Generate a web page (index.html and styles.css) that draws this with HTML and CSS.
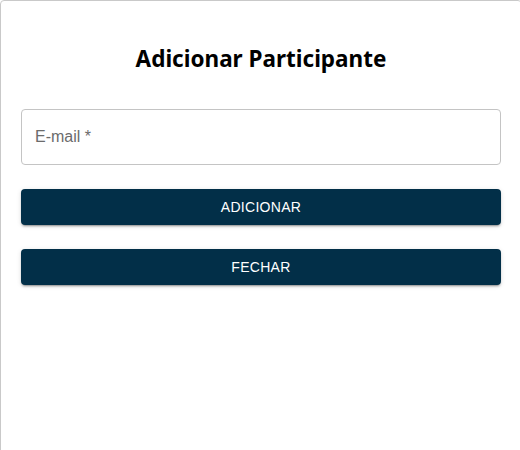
FILE: index.html
```html
<!DOCTYPE html>
<html lang="pt">
<head>
<meta charset="utf-8">
<title>Adicionar Participante</title>
<link rel="stylesheet" href="styles.css">
</head>
<body>
<div class="card">
  <h2 class="title">Adicionar Participante</h2>
  <div class="field">
    <span class="label">E-mail *</span>
  </div>
  <button class="btn">ADICIONAR</button>
  <button class="btn">FECHAR</button>
</div>
</body>
</html>
```
FILE: styles.css
```css
html, body {
  margin: 0;
  padding: 0;
  background: #ffffff;
  overflow: hidden;
}
.card {
  box-sizing: border-box;
  width: 522px;
  min-height: 470px;
  border: 1px solid #c9c9c9;
  border-radius: 4px;
  padding: 43px 20px 0 20px;
  display: flex;
  flex-direction: column;
  gap: 24px;
  font-family: "Liberation Sans", Arial, sans-serif;
}
.title {
  margin: 0 0 11px 0;
  font-family: "Noto Sans", "Open Sans", sans-serif;
  font-size: 22.5px;
  font-weight: 700;
  line-height: 30px;
  text-align: center;
  color: #000000;
}
.field {
  box-sizing: border-box;
  height: 56px;
  border: 1px solid #c4c4c4;
  border-radius: 4px;
  padding: 0 13px;
  display: flex;
  align-items: center;
}
.label {
  font-size: 16px;
  color: #6b6b6b;
}
.btn {
  height: 36px;
  border: none;
  border-radius: 4px;
  background: #022f48;
  color: #ffffff;
  font-family: "Liberation Sans", Arial, sans-serif;
  font-size: 14px;
  letter-spacing: 0.3px;
  box-shadow: 0 3px 1px -2px rgba(0,0,0,0.2), 0 2px 2px 0 rgba(0,0,0,0.14), 0 1px 5px 0 rgba(0,0,0,0.12);
  padding: 0;
}
```
